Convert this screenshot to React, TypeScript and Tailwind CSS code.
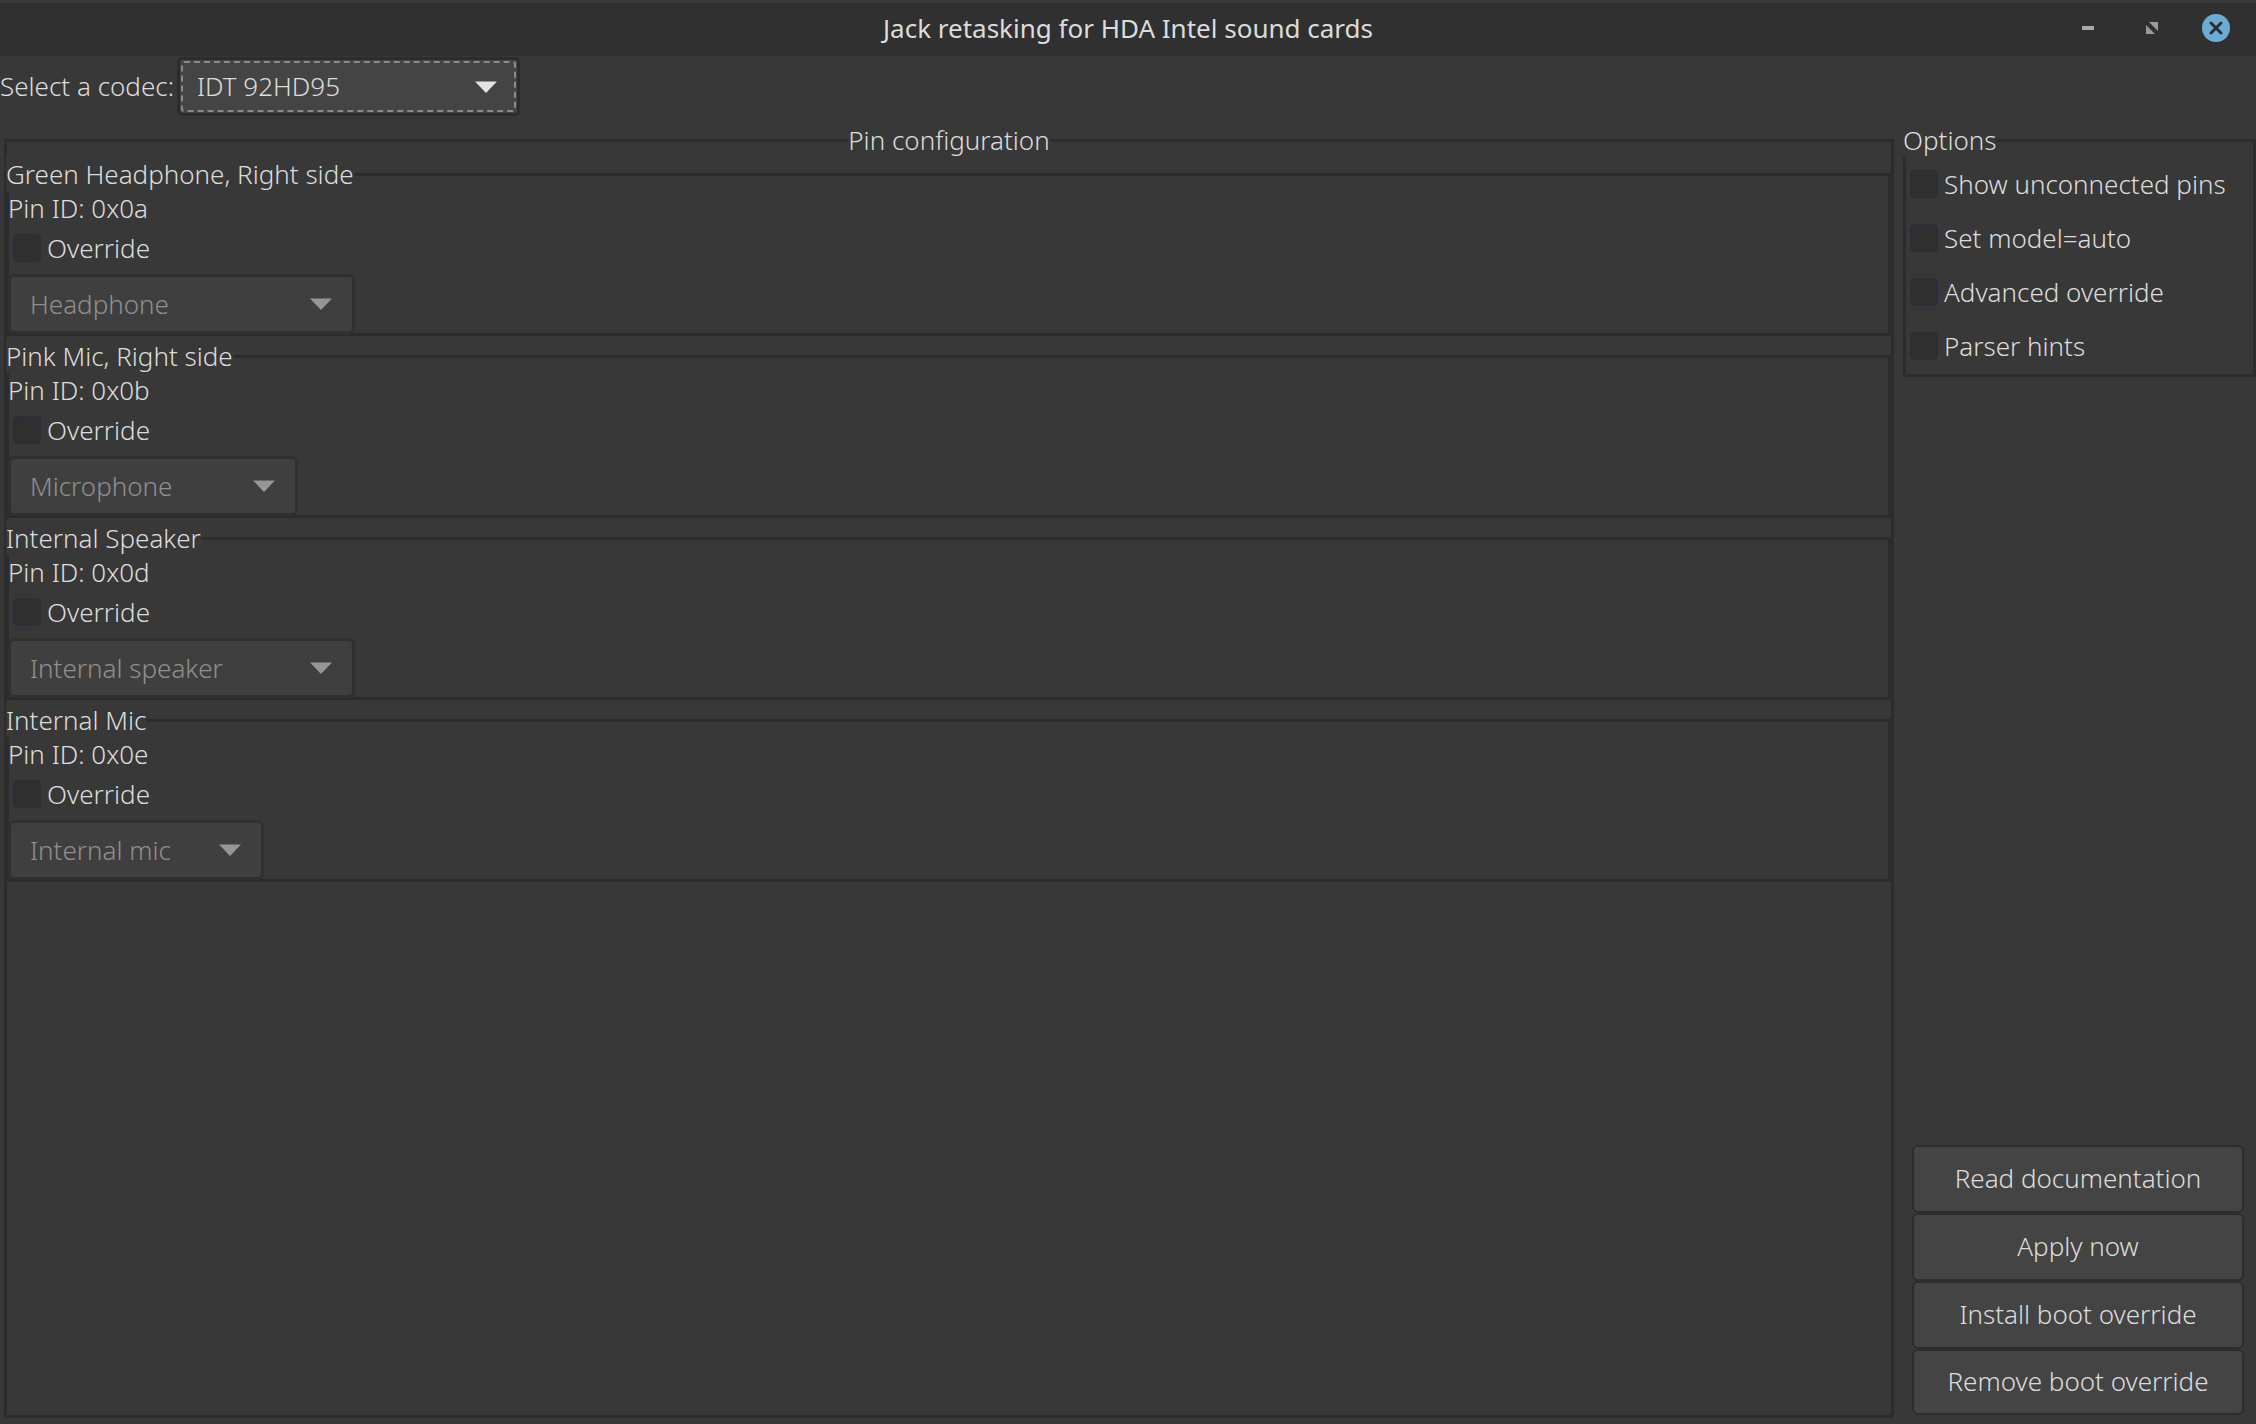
import React from 'react';

const Arrow: React.FC<{ color: string }> = ({ color }) => (
  <svg width="24" height="14" viewBox="0 0 24 14" className="shrink-0">
    <path d="M1 1.5h22L12 13z" fill={color} />
  </svg>
);

const Check: React.FC<{ label: string; className?: string }> = ({ label, className }) => (
  <label className={`flex items-center whitespace-nowrap ${className ?? ''}`}>
    <span className="w-[28px] h-[28px] rounded-[5px] border-2 border-[#2b2d38] bg-[#2f2f2f] shrink-0" />
    <span className="ml-[6px] leading-none">{label}</span>
  </label>
);

interface Pin {
  title: string;
  id: string;
  value: string;
  width: string;
}

const pins: Pin[] = [
  { title: 'Green Headphone, Right side', id: '0x0a', value: 'Headphone', width: 'w-[347px]' },
  { title: 'Pink Mic, Right side', id: '0x0b', value: 'Microphone', width: 'w-[290px]' },
  { title: 'Internal Speaker', id: '0x0d', value: 'Internal speaker', width: 'w-[347px]' },
  { title: 'Internal Mic', id: '0x0e', value: 'Internal mic', width: 'w-[256px]' },
];

const PinGroup: React.FC<{ pin: Pin }> = ({ pin }) => (
  <fieldset className="border-[3px] border-[#2c2c2c] h-[179px] mb-[3px] -ml-[1px]">
    <legend className="bg-[#383838] -ml-[3px] leading-[34px] h-[34px] whitespace-nowrap">{pin.title}</legend>
    <div className="h-[32px] mt-[1px] -ml-[1px] flex items-center">Pin ID: {pin.id}</div>
    <Check label="Override" className="h-[40px] pl-[4px] mt-[4px]" />
    <div className={`${pin.width} h-[60px] mt-[6px] -ml-[1px] flex items-center justify-between px-[19px] rounded-[6px] border-[3px] border-[#303030] bg-[#3f3f3f] text-[#8f8f8f] whitespace-nowrap`}>
      <span>{pin.value}</span>
      <Arrow color="#969696" />
    </div>
  </fieldset>
);

export default function App() {
  return (
    <div
      className="w-[2256px] h-[1424px] flex flex-col bg-[#383838] text-[#dcdcdc] text-[26px] font-light overflow-hidden"
      style={{ fontFamily: '"Noto Sans", sans-serif' }}
    >
      <div className="h-[56px] shrink-0 grid grid-cols-[1fr_auto_1fr] items-center bg-[#303030] border-t-[3px] border-[#3a3a3a]">
        <div />
        <div className="font-normal -mt-[3px]">Jack retasking for HDA Intel sound cards</div>
        <div className="flex items-center justify-end -mt-[3px] pr-[26px]">
          <svg width="12" height="4" viewBox="0 0 12 4"><rect width="12" height="4" fill="#aaaaaa" /></svg>
          <svg width="12" height="12" viewBox="0 0 12 12" className="ml-[52px]">
            <path d="M3 0h9v9zM0 3l9 9H0z" fill="#9a9a9a" />
          </svg>
          <svg width="28" height="28" viewBox="0 0 28 28" className="ml-[44px]">
            <circle cx="14" cy="14" r="14" fill="#6cabd2" />
            <path d="M9 9l10 10M19 9 9 19" stroke="#2a2f33" strokeWidth="3" strokeLinecap="round" />
          </svg>
        </div>
      </div>

      <div className="h-[67px] shrink-0 flex items-start pt-[1px]">
        <span className="w-[177px] shrink-0 whitespace-nowrap h-[59px] flex items-center">Select a codec:</span>
        <div className="w-[343px] h-[59px] shrink-0 rounded-[5px] border-[3px] border-[#2c2c2c] bg-[#444444] p-[1px]">
          <div className="h-full flex items-center justify-between pl-[14px] pr-[16px] border-2 border-dashed border-[#8a8a8a] rounded-[3px]">
            <span>IDT 92HD95</span>
            <Arrow color="#e2e2e2" />
          </div>
        </div>
      </div>

      <div className="flex-1 flex pl-[4px] pb-[6px] min-h-0">
        <fieldset className="w-[1890px] shrink-0 border-[3px] border-[#2c2c2c] pr-0">
          <legend className="mx-auto bg-[#383838] leading-[34px] h-[34px]">Pin configuration</legend>
          <div>
            {pins.map(pin => (
              <PinGroup key={pin.id} pin={pin} />
            ))}
          </div>
        </fieldset>

        <div className="w-[353px] ml-[9px] shrink-0 flex flex-col">
          <fieldset className="h-[254px] border-[3px] border-[#2c2c2c] pl-[4px]">
            <legend className="bg-[#383838] -ml-[7px] leading-[34px] h-[34px]">Options</legend>
            <div className="flex flex-col gap-[26px] mt-[13px]">
              <Check label="Show unconnected pins" />
              <Check label="Set model=auto" />
              <Check label="Advanced override" />
              <Check label="Parser hints" />
            </div>
          </fieldset>
          <div className="mt-auto mb-[3px] ml-[9px] w-[332px] flex flex-col">
            {['Read documentation', 'Apply now', 'Install boot override', 'Remove boot override'].map(label => (
              <button key={label} className="h-[68px] last:h-[66px] pb-[2px] rounded-[6px] border-2 border-[#2d2d2d] bg-[#444444]">
                {label}
              </button>
            ))}
          </div>
        </div>
      </div>
    </div>
  );
}
